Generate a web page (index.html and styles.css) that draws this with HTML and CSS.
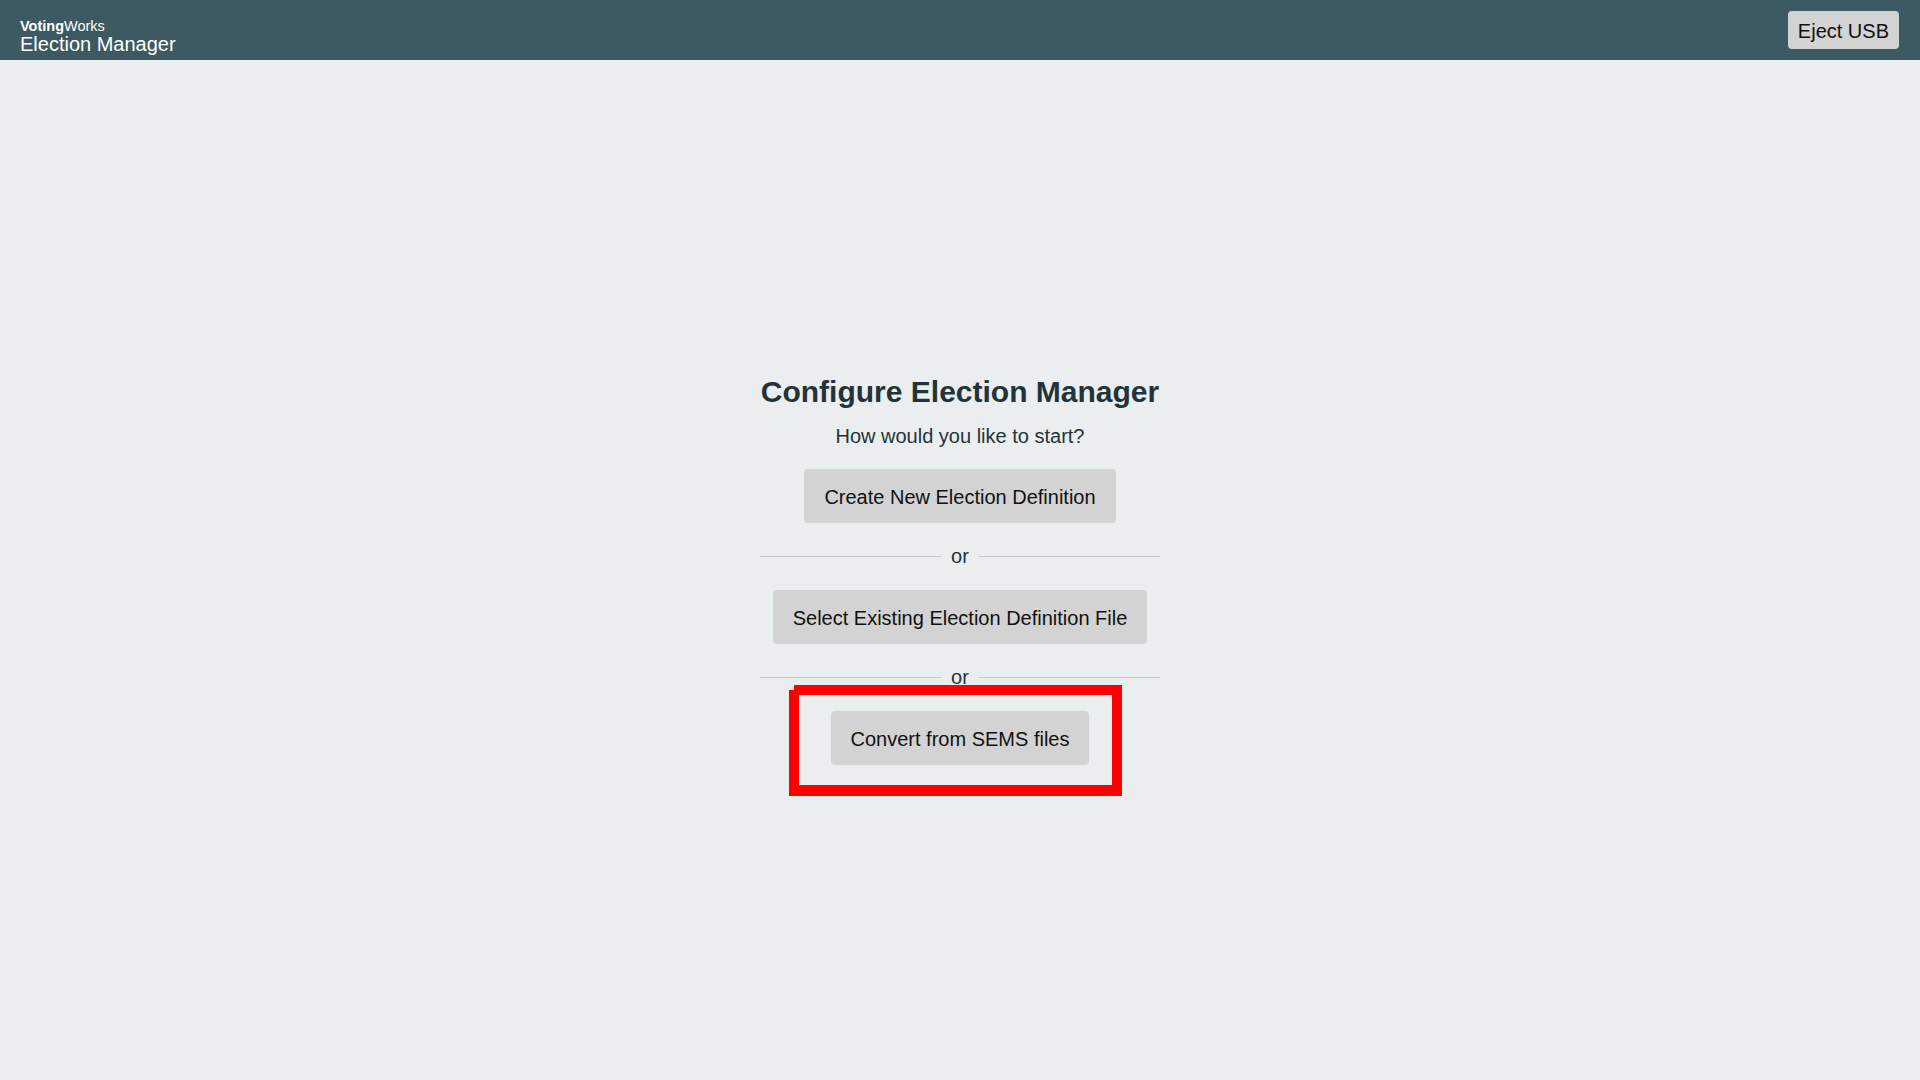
FILE: index.html
```html
<!DOCTYPE html>
<html lang="en">
<head>
<meta charset="utf-8">
<title>Election Manager</title>
<link rel="stylesheet" href="styles.css">
</head>
<body>
<header class="topbar">
  <div class="brand">
    <div class="brand-org"><strong>Voting</strong>Works</div>
    <div class="brand-app">Election Manager</div>
  </div>
  <button class="btn btn-eject" type="button">Eject USB</button>
</header>
<main class="main">
  <section class="setup">
    <h1 class="setup-title">Configure Election Manager</h1>
    <p class="setup-sub">How would you like to start?</p>
    <button class="btn btn-large" type="button">Create New Election Definition</button>
    <div class="divider"><span class="divider-line"></span><span class="divider-text">or</span><span class="divider-line"></span></div>
    <button class="btn btn-large" type="button">Select Existing Election Definition File</button>
    <div class="divider divider-last"><span class="divider-line"></span><span class="divider-text">or</span><span class="divider-line"></span></div>
    <button class="btn btn-large" type="button">Convert from SEMS files</button>
  </section>
</main>
<div class="highlight"></div>
</body>
</html>
```
FILE: styles.css
```css
* { box-sizing: border-box; }
html, body { margin: 0; padding: 0; }
body {
  font-family: "Liberation Sans", Arial, sans-serif;
  background: #ebeeef;
  color: #263238;
  width: 1920px;
  height: 1080px;
  overflow: hidden;
}
.topbar {
  height: 60px;
  background: #3d5a63;
  color: #ffffff;
  display: flex;
  justify-content: space-between;
  align-items: flex-start;
  padding: 0 21px 0 20px;
}
.brand { padding-top: 17.5px; }
.brand-org { font-size: 14.5px; line-height: 16px; }
.brand-org strong { font-weight: 700; }
.brand-app { font-size: 20px; line-height: 20px; }
.btn {
  font-family: "Liberation Sans", Arial, sans-serif;
  font-size: 20px;
  line-height: 24px;
  color: #111111;
  background: #d3d3d3;
  border: none;
  border-radius: 4px;
  cursor: pointer;
}
.btn-eject {
  align-self: center;
  padding: 8px 10px 6px;
  height: 38px;
}
.btn-large {
  padding: 16px 20px 14px;
  height: 54px;
}
.main {
  height: 1020px;
  display: flex;
  align-items: center;
  justify-content: center;
}
.setup {
  display: flex;
  flex-direction: column;
  align-items: center;
}
.setup-title {
  margin: -1px 0 14.5px;
  font-size: 30px;
  line-height: 36px;
  font-weight: 700;
  color: #22343a;
}
.setup-sub {
  margin: 0 0 21px;
  font-size: 20px;
  line-height: 24px;
  color: #22343a;
}
.divider {
  width: 400px;
  display: flex;
  align-items: center;
  margin: 21px 0 22px;
}
.divider-line {
  flex: 1;
  height: 1px;
  background: #c3c9cb;
}
.divider-text {
  margin: 0 10px;
  font-size: 20px;
  line-height: 24px;
  color: #22343a;
}
.highlight {
  position: absolute;
  left: 794px;
  top: 685px;
  width: 328px;
  height: 111px;
  border-top: 10px solid #ff0000;
  border-right: 10px solid #ff0000;
  border-bottom: 11px solid #ff0000;
}
.highlight::before {
  content: "";
  position: absolute;
  left: -5px;
  top: -5px;
  width: 10px;
  height: 106px;
  background: #ff0000;
}
```
